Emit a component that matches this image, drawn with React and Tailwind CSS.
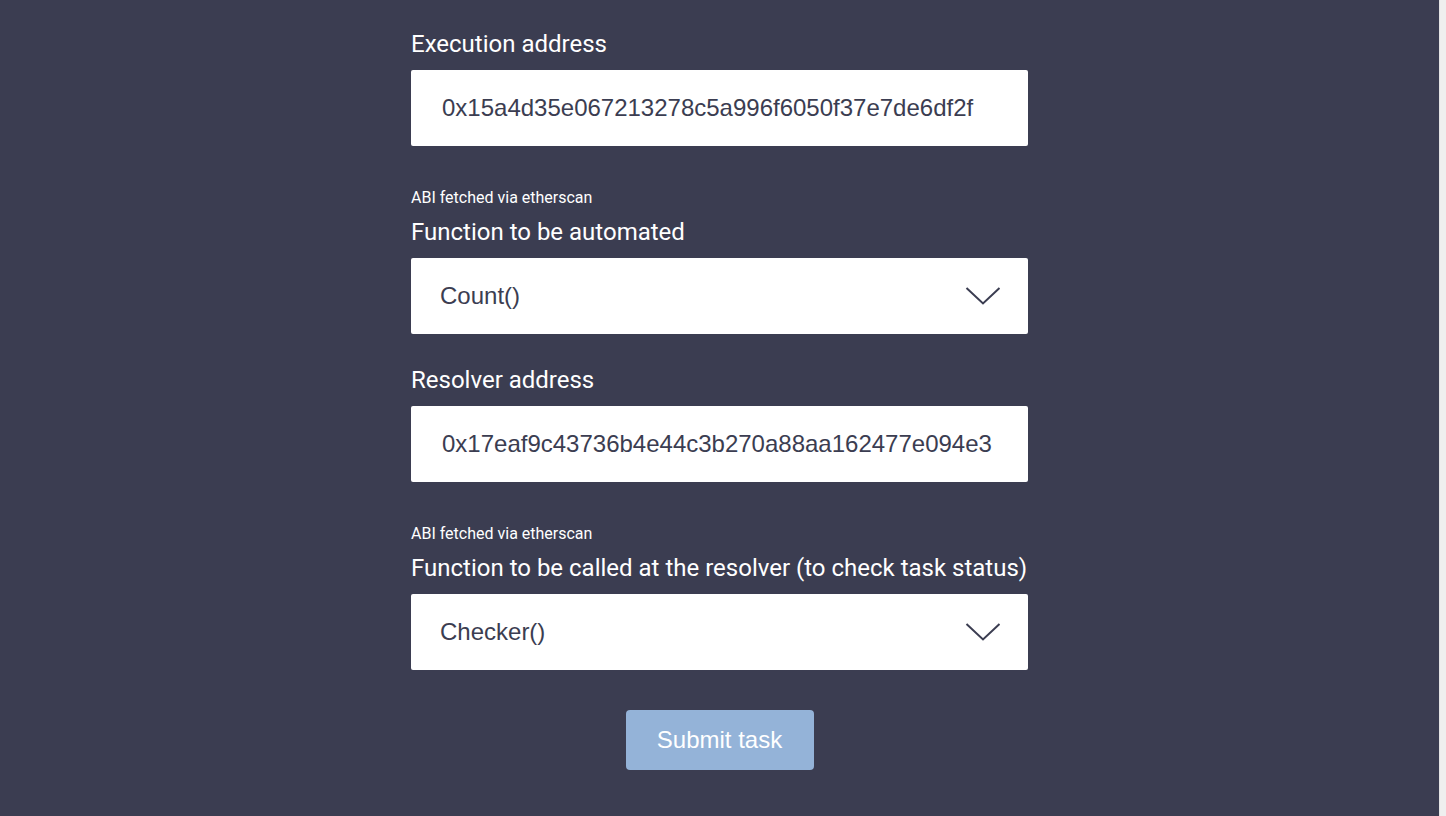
import React from 'react';

const ADDR_EXEC = '0x15a4d35e067213278c5a996f6050f37e7de6df2f';
const ADDR_RESOLVER = '0x17eaf9c43736b4e44c3b270a88aa162477e094e3';

function Label({ children }) {
  return (
    <div className="mb-[11px] text-[24px] leading-[30px] text-white" style={{ fontFamily: 'Roboto, sans-serif' }}>
      {children}
    </div>
  );
}

function AbiNote() {
  return (
    <div className="mb-[9px] text-[16px] leading-[20px] text-white" style={{ fontFamily: 'Roboto, sans-serif' }}>
      ABI fetched via etherscan
    </div>
  );
}

function AddressInput({ value }) {
  return (
    <div className="flex h-[76px] items-center rounded-[2px] bg-white pl-[31px] text-[24px] text-[#3b3d51]"
      style={{ fontFamily: '"Liberation Sans", Arial, sans-serif' }}>
      {value}
    </div>
  );
}

function Select({ value }) {
  return (
    <div className="flex h-[76px] items-center justify-between rounded-[2px] bg-white pl-[29px] pr-[27px] text-[24px] text-[#3b3d51]"
      style={{ fontFamily: '"Liberation Sans", Arial, sans-serif' }}>
      <span>{value}</span>
      <svg width="36" height="20" viewBox="0 0 36 20" fill="none">
        <path d="M1.5 2 L18 17.5 L34.5 2" stroke="#3b3d51" strokeWidth="2" />
      </svg>
    </div>
  );
}

export default function App() {
  return (
    <div className="flex h-[816px] w-full overflow-hidden bg-[#3b3d51]">
      <div className="flex flex-1 justify-center">
        <div className="w-[617px] pt-[29px]">
          <Label>Execution address</Label>
          <AddressInput value={ADDR_EXEC} />

          <div className="mt-[42px]">
            <AbiNote />
            <Label>Function to be automated</Label>
            <Select value="Count()" />
          </div>

          <div className="mt-[31px]">
            <Label>Resolver address</Label>
            <AddressInput value={ADDR_RESOLVER} />
          </div>

          <div className="mt-[42px]">
            <AbiNote />
            <Label>Function to be called at the resolver (to check task status)</Label>
            <Select value="Checker()" />
          </div>

          <div className="mt-[40px] flex justify-center">
            <button className="h-[60px] w-[188px] rounded-[4px] bg-[#94b3d8] text-[24px] text-white"
              style={{ fontFamily: '"Liberation Sans", Arial, sans-serif' }}>
              Submit task
            </button>
          </div>
        </div>
      </div>
      <div className="w-[7px] border-l border-[#e4e4e4] bg-[#efefef]" />
    </div>
  );
}
